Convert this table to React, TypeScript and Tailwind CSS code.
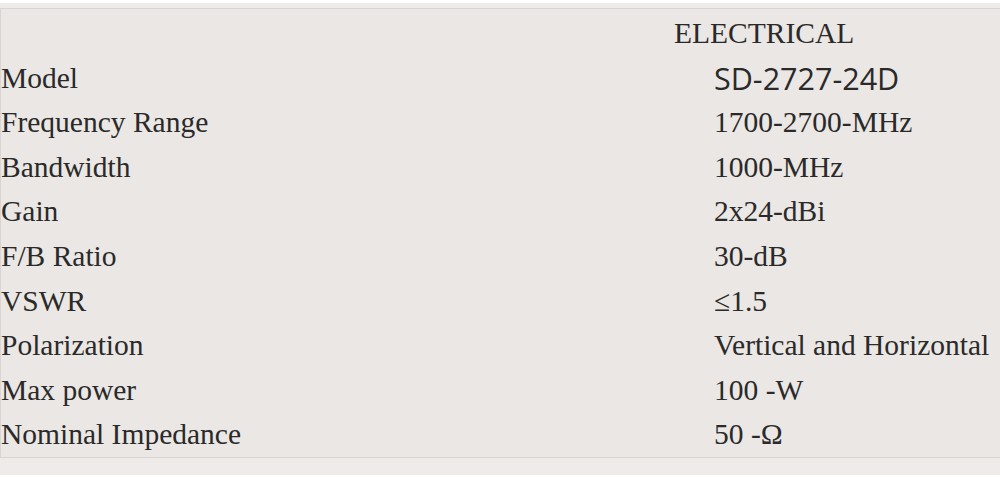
const rows: [string, string][] = [
  ["Frequency Range", "1700-2700-MHz"],
  ["Bandwidth", "1000-MHz"],
  ["Gain", "2x24-dBi"],
  ["F/B Ratio", "30-dB"],
  ["VSWR", "\u22641.5"],
  ["Polarization", "Vertical and Horizontal"],
  ["Max power", "100 -W"],
  ["Nominal Impedance", "50 -\u03a9"],
];

export default function App() {
  return (
    <div className="h-[500px] w-[1000px] bg-white pt-[3px] font-['Liberation_Serif',serif] text-[29.5px] leading-[44.6px] text-[#2a2a2a]">
      <div className="bg-[#eeebe8] pt-[5px] pb-[17px]">
        <div className="border-y border-l border-[#d8d5d2] bg-[#eae7e4] pt-[2px]">
          {/* Heading */}
          <div className="pl-[673px]">ELECTRICAL</div>

          <div className="grid grid-cols-[713px_1fr]">
            <div>Model</div>
            <div className="font-['Open_Sans',sans-serif] text-[30.5px] font-normal text-[#2a2a2a]">
              SD-2727-24D
            </div>
            {rows.map(([label, value]) => (
              <Row key={label} label={label} value={value} />
            ))}
          </div>
        </div>
      </div>
    </div>
  );
}

function Row({ label, value }: { label: string; value: string }) {
  return (
    <>
      <div className="whitespace-nowrap">{label}</div>
      <div className="whitespace-nowrap">{value}</div>
    </>
  );
}
